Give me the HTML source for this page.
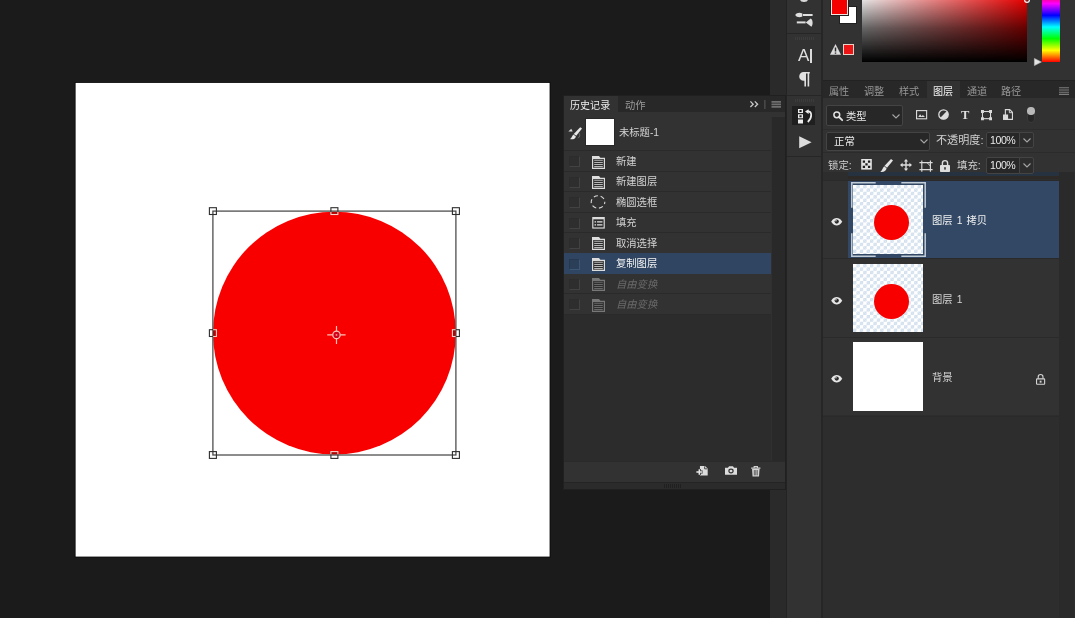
<!DOCTYPE html>
<html lang="zh-CN">
<head>
<meta charset="utf-8">
<title>Photoshop</title>
<style>
*{box-sizing:border-box;margin:0;padding:0}
html,body{width:1075px;height:618px;overflow:hidden;background:#1b1b1b}
body{position:relative;font-family:"Liberation Sans","Noto Sans CJK SC",sans-serif;font-size:10px;color:#d6d6d6;line-height:1}
.a{position:absolute}
svg{position:absolute;overflow:visible}
.t{will-change:transform;position:absolute;white-space:nowrap;line-height:12px;height:12px}
/* strips */
#strip{left:770px;top:0;width:17px;height:618px;background:#2a2a2a}
#toolcol{left:787px;top:0;width:34px;height:618px;background:#323232}
#gap{left:821px;top:0;width:2px;height:618px;background:#262626}
#right{left:823px;top:0;width:252px;height:618px;background:#2d2d2d}
/* history */
#hist{left:563px;top:95px;width:223px;height:395px;background:#2c2c2c;border:1px solid #202020;overflow:hidden}
#hist .tabs{left:0;top:0;width:221px;height:16px;background:#282828}
#hist .tabon{left:0;top:0;width:54px;height:16px;background:#323232}
#hist .list{left:0;top:16px;width:221px;height:203.4px;background:#323232}
#hist .track{left:207px;top:21px;width:14px;height:344px;background:#292929;border-left:1px solid #303030}
#hist .row{left:0;width:207px;height:20.45px;border-top:1px solid #2a2a2a}
#hist .row.sel{background:#2f4561;height:21.3px;z-index:1;border-top-color:#2f4561}
#hist .cb{position:absolute;left:5px;top:5px;width:11px;height:11px;background:#2e2e2e;border:1px solid #424242;border-top-color:#2c2c2c;border-left-color:#2c2c2c}
#hist .row.sel .cb{background:#2b3f59;border-color:#28384e #3c5676 #3c5676 #28384e}
#hist .row .t{left:51.5px;top:4.6px;font-size:10.3px;color:#d2d2d2}
#hist .row.dis .t{color:#6a6a6a;font-style:italic}
#hist .row.sel .t{color:#f4f4f4}
#hist .foot{left:0;top:365px;width:221px;height:21px;background:#323232;border-top:1px solid #2a2a2a}
#hist .grip{left:0;top:386px;width:221px;height:7px;background:#2b2b2b;border-top:1px solid #242424}
/* right dock */
#right .cp{left:0;top:0;width:252px;height:80px;background:#323232}
#right .tabs{left:0;top:80px;width:252px;height:18px;background:#282828;border-top:1px solid #222}
#right .tabs .t{top:5px;font-size:10.1px;color:#969696}
#right .tabon{left:104px;top:81px;width:33px;height:17px;background:#323232}
#right .opts{left:0;top:98px;width:252px;height:74px;background:#323232}
#right .dd{position:absolute;background:#272727;border:1px solid #444;border-radius:2px}
#right .lay{left:0;width:236px;height:78.7px;background:#323232;border-top:1px solid #2a2a2a}
#right .lay .t{word-spacing:1.2px;left:109.4px;top:34.6px;font-size:10.3px;color:#d4d4d4}
#right .thumb{position:absolute;left:30.4px;top:4.8px;width:70px;height:68.4px;background:#fff}
#right .chk{background-color:#fff;background-image:linear-gradient(45deg,#d3e0ee 25%,transparent 25%,transparent 75%,#d3e0ee 75%),linear-gradient(45deg,#d3e0ee 25%,transparent 25%,transparent 75%,#d3e0ee 75%);background-size:6.8px 6.8px;background-position:0 0,3.4px 3.4px}
#right .dot{position:absolute;left:20.4px;top:19.6px;width:35px;height:35px;border-radius:50%;background:#f80000}
</style>
</head>
<body>
<!-- document canvas -->
<svg id="doc" width="1075" height="618" style="left:0;top:0">
<defs><clipPath id="cc"><circle cx="334.4" cy="333.1" r="121.4"/></clipPath></defs>
<rect x="74.8" y="82.1" width="475.6" height="475.3" fill="#050505"/>
<rect x="75.6" y="82.9" width="474" height="473.7" fill="#fff"/>
<circle cx="334.4" cy="333.1" r="121.4" fill="#f80000"/>
<rect x="212.9" y="211.1" width="243.0" height="243.9" fill="none" stroke="#484848" stroke-width="1.25"/>
<g><rect x="209.4" y="207.7" width="7" height="6.8" fill="none" stroke="#2e2e2e" stroke-width="1.1"/><rect x="330.9" y="207.7" width="7" height="6.8" fill="none" stroke="#2e2e2e" stroke-width="1.1"/><rect x="452.4" y="207.7" width="7" height="6.8" fill="none" stroke="#2e2e2e" stroke-width="1.1"/><rect x="209.4" y="329.7" width="7" height="6.8" fill="none" stroke="#2e2e2e" stroke-width="1.1"/><rect x="452.4" y="329.7" width="7" height="6.8" fill="none" stroke="#2e2e2e" stroke-width="1.1"/><rect x="209.4" y="451.6" width="7" height="6.8" fill="none" stroke="#2e2e2e" stroke-width="1.1"/><rect x="330.9" y="451.6" width="7" height="6.8" fill="none" stroke="#2e2e2e" stroke-width="1.1"/><rect x="452.4" y="451.6" width="7" height="6.8" fill="none" stroke="#2e2e2e" stroke-width="1.1"/></g>
<g clip-path="url(#cc)"><rect x="209.4" y="207.7" width="7" height="6.8" fill="rgba(110,0,0,.45)" stroke="#ffd0c8" stroke-width="1.1"/><rect x="330.9" y="207.7" width="7" height="6.8" fill="rgba(110,0,0,.45)" stroke="#ffd0c8" stroke-width="1.1"/><rect x="452.4" y="207.7" width="7" height="6.8" fill="rgba(110,0,0,.45)" stroke="#ffd0c8" stroke-width="1.1"/><rect x="209.4" y="329.7" width="7" height="6.8" fill="rgba(110,0,0,.45)" stroke="#ffd0c8" stroke-width="1.1"/><rect x="452.4" y="329.7" width="7" height="6.8" fill="rgba(110,0,0,.45)" stroke="#ffd0c8" stroke-width="1.1"/><rect x="209.4" y="451.6" width="7" height="6.8" fill="rgba(110,0,0,.45)" stroke="#ffd0c8" stroke-width="1.1"/><rect x="330.9" y="451.6" width="7" height="6.8" fill="rgba(110,0,0,.45)" stroke="#ffd0c8" stroke-width="1.1"/><rect x="452.4" y="451.6" width="7" height="6.8" fill="rgba(110,0,0,.45)" stroke="#ffd0c8" stroke-width="1.1"/></g>
<g fill="none" stroke="#ffc2b4" stroke-width="1.2">
<circle cx="336.5" cy="334.9" r="3.7" fill="#d4001a"/>
<path d="M327.2 334.9H332.8M340.2 334.9H345.6M336.5 326V331.2M336.5 338.6V344"/>
</g>
<circle cx="336.5" cy="334.9" r="0.9" fill="#ff9a8c"/>
</svg>

<!-- vertical strips -->
<div class="a" id="strip"></div>
<div class="a" id="toolcol"></div>
<div class="a" id="gap"></div>

<!-- right dock -->
<div class="a" id="right">
<div class="a cp"></div>
<!-- color panel -->
<div class="a" style="left:17.2px;top:6.8px;width:16.2px;height:16.4px;background:#fff;outline:1px solid #202020"></div>
<div class="a" style="left:8px;top:-4px;width:16.6px;height:18.6px;background:#f40000;border:1px solid #f4e4e0;outline:1px solid #202020"></div>
<svg width="11" height="11" viewBox="0 0 11 11" style="left:6.6px;top:44.2px"><path d="M5.5 0L11 10.8H0Z" fill="#dcdcdc"/><path d="M5.5 3.6V7.4M5.5 8.4V9.8" stroke="#2a2a2a" stroke-width="1.5"/></svg>
<div class="a" style="left:20.3px;top:44px;width:11.2px;height:11.2px;background:#ec1414;border:1px solid #ecd2c6"></div>
<div class="a" style="left:39px;top:-6px;width:165.4px;height:67.8px;background:linear-gradient(to bottom,rgba(0,0,0,0) 0%,rgba(0,0,0,.6) 50%,#000 100%),linear-gradient(to right,#fff,#f00)"></div>
<div class="a" style="left:219.4px;top:-8px;width:17.2px;height:70px;background:linear-gradient(to bottom,#f00 0%,#f0f 16.67%,#00f 33.33%,#0ff 50%,#0f0 66.67%,#ff0 83.33%,#f00 100%)"></div>
<svg width="8" height="8" viewBox="0 0 8 8" style="left:210.6px;top:57.6px"><path d="M0.4 0.4L7.4 4L0.4 7.6Z" fill="#e4e4e4" stroke="#bbb" stroke-width="0.6"/></svg>
<svg width="6" height="4" viewBox="0 0 6 4" style="left:201px;top:0"><circle cx="3" cy="0" r="2.4" fill="none" stroke="#f2f2f2" stroke-width="1.2"/></svg>
<div class="a tabs">
<div class="t" style="left:6.2px">属性</div><div class="t" style="left:41px">调整</div><div class="t" style="left:75.6px">样式</div>
<div class="t" style="left:143.8px">通道</div><div class="t" style="left:177.8px">路径</div>
</div>
<div class="a tabon"></div>
<div class="t" style="left:110.4px;top:86px;font-size:10.1px;color:#f0f0f0">图层</div>
<svg width="10" height="8" viewBox="0 0 10 8" style="left:236px;top:86.5px"><path d="M0 0.8H10M0 3H10M0 5.2H10M0 7.4H10" stroke="#7c7c7c" stroke-width="1.1"/></svg>
<div class="a opts"></div>
<div class="a" style="left:24.5px;top:171.5px;width:211.5px;height:4.4px;background:#26323f"></div>
<div class="a" style="left:24.5px;top:175.9px;width:211.5px;height:3.6px;background:#2c2927"></div>
<!-- filter row -->
<div class="dd" style="left:3px;top:105px;width:77px;height:20.5px"></div>
<svg width="10" height="10" viewBox="0 0 10 10" style="left:10px;top:110.5px"><circle cx="3.8" cy="3.8" r="2.9" fill="none" stroke="#e2e2e2" stroke-width="1.5"/><path d="M6 6L9.2 9.2" stroke="#e2e2e2" stroke-width="1.8" stroke-linecap="round"/></svg>
<div class="t" style="left:23px;top:110.8px;font-size:10.3px;color:#e6e6e6">类型</div>
<svg width="8" height="5" viewBox="0 0 8 5" style="left:69px;top:113.5px"><path d="M0.5 0.5L4 4L7.5 0.5" fill="none" stroke="#a6a6a6" stroke-width="1.1"/></svg>
<svg width="11.2" height="9.4" viewBox="0 0 12 10" style="left:93.2px;top:109.7px"><rect x="0.6" y="0.6" width="10.8" height="8.8" fill="none" stroke="#dadada" stroke-width="1.2"/><path d="M2.4 7.6L4.4 4.6L6 6.6L7.4 5.4L9.6 7.6Z" fill="#dadada"/></svg>
<svg width="11" height="11" viewBox="0 0 11 11" style="left:115.2px;top:109.4px"><circle cx="5.5" cy="5.5" r="4.7" fill="none" stroke="#dadada" stroke-width="1.3"/><path d="M8.9 2.1A4.8 4.8 0 0 1 2.1 8.9Z" fill="#dadada"/></svg>
<div class="t" style="left:137.6px;top:107.6px;font-family:'Liberation Serif',serif;font-weight:bold;font-size:12.5px;line-height:14px;height:14px;color:#dedede">T</div>
<svg width="11" height="10.2" viewBox="0 0 12 11" style="left:157.6px;top:109.6px"><rect x="1.6" y="1.6" width="8.8" height="7.8" fill="none" stroke="#dadada" stroke-width="1.2"/><path d="M0 0H3.2V3.2H0ZM8.8 0H12V3.2H8.8ZM0 7.8H3.2V11H0ZM8.8 7.8H12V11H8.8Z" fill="#dadada"/></svg>
<svg width="10" height="11" viewBox="0 0 11 12" style="left:179.8px;top:109.4px"><path d="M2.6 0.6H7.4L10.4 3.6V11.4H2.6Z" fill="none" stroke="#dadada" stroke-width="1.2"/><path d="M7 0.6V4H10.4" fill="none" stroke="#dadada" stroke-width="1"/><rect x="0" y="6" width="5.6" height="6" fill="#dadada"/></svg>
<div class="a" style="left:204.3px;top:108px;width:8px;height:15px;border-radius:4px;background:#262626;border:1px solid #3a3a3a"></div>
<div class="a" style="left:204.4px;top:107.2px;width:7.6px;height:7.6px;border-radius:50%;background:#b9b9b9"></div>
<div class="a" style="left:0;top:129px;width:252px;height:1px;background:#2c2c2c"></div>
<!-- blend row -->
<div class="dd" style="left:3px;top:132px;width:104px;height:18.5px"></div>
<div class="t" style="left:10.6px;top:135.6px;font-size:10.4px;color:#ececec">正常</div>
<svg width="8" height="5" viewBox="0 0 8 5" style="left:96.6px;top:139.4px"><path d="M0.5 0.5L4 4L7.5 0.5" fill="none" stroke="#a6a6a6" stroke-width="1.1"/></svg>
<div class="t" style="left:112.6px;top:133.6px;font-size:11.1px;color:#cfcfcf">不透明度:</div>
<div class="dd" style="left:162.8px;top:131.5px;width:34.2px;height:16.5px;border-radius:2px 0 0 2px"></div>
<div class="dd" style="left:196px;top:131.5px;width:15px;height:16.5px;background:#2d2d2d;border-radius:0 2px 2px 0"></div>
<div class="t" style="left:166.6px;top:133.8px;font-size:10.6px;color:#e8e8e8;letter-spacing:-0.45px">100%</div>
<svg width="8" height="5" viewBox="0 0 8 5" style="left:199.6px;top:138px"><path d="M0.5 0.5L4 4L7.5 0.5" fill="none" stroke="#a6a6a6" stroke-width="1.1"/></svg>
<div class="a" style="left:0;top:152px;width:252px;height:1px;background:#2b2b2b"></div>
<!-- lock row -->
<div class="t" style="left:5.4px;top:160.3px;font-size:10.4px;color:#cfcfcf">锁定:</div>
<svg width="11" height="10.6" viewBox="0 0 11 11" style="left:38.2px;top:159.4px"><rect width="11" height="11" fill="#e4e4e4"/><path d="M1.6 1.6H4V4H1.6ZM7 1.6H9.4V4H7ZM4.3 4.3H6.7V6.7H4.3ZM1.6 7H4V9.4H1.6ZM7 7H9.4V9.4H7Z" fill="#1e1e1e"/></svg>
<svg width="13" height="13" viewBox="0 0 13 13" style="left:57.4px;top:159px"><path d="M11 0L13 1.6L7 8.8L4.6 6.8Z" fill="#e4e4e4"/><path d="M4.2 7.2L6.6 9.2C6.2 12 3.6 13.2 0.2 12.8C2.4 11.6 2.4 8.8 4.2 7.2Z" fill="#e4e4e4"/></svg>
<svg width="12" height="12" viewBox="0 0 12 12" style="left:77.2px;top:159.4px"><path d="M6 0L8.2 2.6H6.7V5.3H9.4V3.8L12 6L9.4 8.2V6.7H6.7V9.4H8.2L6 12L3.8 9.4H5.3V6.7H2.6V8.2L0 6L2.6 3.8V5.3H5.3V2.6H3.8Z" fill="#dcdcdc"/></svg>
<svg width="14" height="12" viewBox="0 0 14 12" style="left:95.6px;top:160.2px"><path d="M0.4 2.6H13.6M0.4 9.6H13.6M2.8 0.4V11.8M11.4 0.4V11.8" fill="none" stroke="#dcdcdc" stroke-width="1.15"/><path d="M8 2.6L11.4 6" stroke="#dcdcdc" stroke-width="1"/></svg>
<svg width="10" height="12" viewBox="0 0 10 12" style="left:117px;top:159.6px"><path d="M2.4 5.4V3.2A2.6 2.6 0 0 1 7.6 3.2V5.4" fill="none" stroke="#dcdcdc" stroke-width="1.4"/><rect x="0" y="5" width="10" height="7" rx="0.8" fill="#dcdcdc"/><rect x="4.2" y="7.2" width="1.6" height="2.4" fill="#323232"/></svg>
<div class="t" style="left:134.2px;top:159.8px;font-size:10.4px;color:#cfcfcf">填充:</div>
<div class="dd" style="left:162.8px;top:156.5px;width:34.2px;height:17.5px;border-radius:2px 0 0 2px"></div>
<div class="dd" style="left:196px;top:156.5px;width:15px;height:17.5px;background:#2d2d2d;border-radius:0 2px 2px 0"></div>
<div class="t" style="left:166.6px;top:159.4px;font-size:10.6px;color:#e8e8e8;letter-spacing:-0.45px">100%</div>
<svg width="8" height="5" viewBox="0 0 8 5" style="left:199.6px;top:163.4px"><path d="M0.5 0.5L4 4L7.5 0.5" fill="none" stroke="#a6a6a6" stroke-width="1.1"/></svg>
<div class="a" style="left:236px;top:172px;width:14.5px;height:446px;background:#2a2a2a"></div>
<!-- layers list -->
<div class="a lay" style="top:179.6px">
<div class="a" style="left:24.5px;top:0;width:211.5px;height:78.7px;background:#324864"></div>
<svg width="11.4" height="7.4" viewBox="0 0 12 8" style="left:7.8px;top:37.5px"><path d="M0 4C2 0.8 4 0 6 0C8 0 10 0.8 12 4C10 7.2 8 8 6 8C4 8 2 7.2 0 4Z" fill="#e6e6e6"/><circle cx="6" cy="3.8" r="2.3" fill="#2a2a2a"/><circle cx="5.2" cy="3" r="0.8" fill="#e6e6e6"/></svg>
<div class="thumb chk"><div class="dot"></div></div>
<svg width="75" height="75" viewBox="0 0 76 76" style="left:27.8px;top:1.2px"><path d="M0.8 26V0.8H25M51 0.8H75.2V26M75.2 52V75.2H51M25 75.2H0.8V52" fill="none" stroke="#c3cdd8" stroke-width="1.5"/></svg>
<div class="t" style="color:#f0f0f0">图层 1 拷贝</div>
</div>
<div class="a lay" style="top:258.2px">
<svg width="11.4" height="7.4" viewBox="0 0 12 8" style="left:7.8px;top:37.5px"><path d="M0 4C2 0.8 4 0 6 0C8 0 10 0.8 12 4C10 7.2 8 8 6 8C4 8 2 7.2 0 4Z" fill="#e6e6e6"/><circle cx="6" cy="3.8" r="2.3" fill="#2a2a2a"/><circle cx="5.2" cy="3" r="0.8" fill="#e6e6e6"/></svg>
<div class="thumb chk"><div class="dot"></div></div>
<div class="t">图层 1</div>
</div>
<div class="a lay" style="top:336.7px">
<svg width="11.4" height="7.4" viewBox="0 0 12 8" style="left:7.8px;top:37.5px"><path d="M0 4C2 0.8 4 0 6 0C8 0 10 0.8 12 4C10 7.2 8 8 6 8C4 8 2 7.2 0 4Z" fill="#e6e6e6"/><circle cx="6" cy="3.8" r="2.3" fill="#2a2a2a"/><circle cx="5.2" cy="3" r="0.8" fill="#e6e6e6"/></svg>
<div class="thumb"></div>
<div class="t">背景</div>
<svg width="9.2" height="10.8" viewBox="0 0 10 12" preserveAspectRatio="none" style="left:213.2px;top:36px"><path d="M2.4 5.4V3.2A2.6 2.6 0 0 1 7.6 3.2V5.4" fill="none" stroke="#d4d4d4" stroke-width="1.2"/><rect x="0.6" y="5.4" width="8.8" height="6" rx="0.6" fill="none" stroke="#d4d4d4" stroke-width="1.2"/><rect x="4" y="7.4" width="2" height="2.2" fill="#d4d4d4"/></svg>
</div>
<div class="a" style="left:0;top:415.6px;width:236px;height:1px;background:#2a2a2a"></div>
</div>

<div class="a" style="left:786px;top:0;width:1px;height:618px;background:#232323"></div>
<!-- tool column icons -->
<div class="a" id="tools" style="left:787px;top:0;width:34px;height:618px">
<div class="a" style="left:13px;top:-4px;width:7.6px;height:5.6px;border-radius:50%;background:#d8d8d8"></div>
<svg width="19" height="16" viewBox="0 0 19 16" style="left:8.4px;top:11.6px"><path d="M0.2 3C1.6 1 4 0 7.4 1.4V4.6C4 6 1.6 5 0.2 3Z" fill="#dedede"/><path d="M8 3H17.6" stroke="#dedede" stroke-width="2"/><path d="M1.8 10.4H10.6" stroke="#dedede" stroke-width="2"/><path d="M10.8 10.4L15.6 6.6C17.8 7.6 18.4 12.2 16.4 14.8Z" fill="#dedede"/></svg>
<div class="a" style="left:0;top:33px;width:34px;height:1px;background:#262626"></div>
<div class="a" style="left:8px;top:37px;width:19px;height:3px;background:repeating-linear-gradient(90deg,#3c3c3c 0 1px,transparent 1px 2px)"></div>
<div class="t" style="left:11.4px;top:47.4px;font-size:17px;line-height:18px;height:18px;color:#e0e0e0">A</div>
<div class="a" style="left:23.4px;top:48.6px;width:1.2px;height:14.6px;background:#dcdcdc"></div>
<svg width="11" height="15" viewBox="0 0 11 15" style="left:12.4px;top:72.4px"><path d="M10.8 0H4.6A4.4 4.4 0 0 0 4.6 8.8H5.4V14.6H7V1.4H8.6V14.6H10.2V1.4H10.8Z" fill="#e0e0e0"/></svg>
<div class="a" style="left:0;top:95px;width:34px;height:1px;background:#262626"></div>
<div class="a" style="left:8px;top:99px;width:19px;height:3px;background:repeating-linear-gradient(90deg,#3c3c3c 0 1px,transparent 1px 2px)"></div>
<div class="a" style="left:5px;top:106.4px;width:23.2px;height:19px;background:#1f1f1f"></div>
<svg width="14" height="15" viewBox="0 0 14 15" style="left:11px;top:109px"><path d="M0 0H5V4H0ZM0 5.2H5V9.2H0ZM0 10.4H5V14.6H0Z" fill="#ececec"/><path d="M1.4 1H3.6V3H1.4ZM1.4 6.2H3.6V8.2H1.4Z" fill="#1f1f1f"/><path d="M7 2.6L10.6 0.2V5Z" fill="#ececec"/><path d="M10 2.4C14 2.4 14.6 8.6 9.8 13" fill="none" stroke="#ececec" stroke-width="1.7"/></svg>
<svg width="13" height="13" viewBox="0 0 13 13" style="left:12px;top:135.6px"><path d="M0.2 0.2L12.6 6.2L0.2 12.2Z" fill="#dcdcdc"/></svg>
<div class="a" style="left:0;top:155.5px;width:34px;height:1px;background:#262626"></div>
</div>

<!-- history panel -->
<div class="a" id="hist">
<div class="a tabs"></div><div class="a tabon"></div>
<div class="t" style="left:6px;top:3.5px;font-size:10.05px;color:#ececec">历史记录</div>
<div class="t" style="left:61px;top:3.5px;font-size:10.3px;color:#9a9a9a">动作</div>
<svg width="30" height="10" viewBox="0 0 30 10" style="left:184.6px;top:3.6px"><path d="M1.4 1.4L4.2 4.2L1.4 7M5.8 1.4L8.6 4.2L5.8 7" fill="none" stroke="#c8c8c8" stroke-width="1.3"/><path d="M15.9 0V9" stroke="#5c5c5c" stroke-width="1"/><path d="M22.5 1.8H32M22.5 4.3H32M22.5 6.8H32" stroke="#6e6e6e" stroke-width="1.7"/></svg>
<div class="a list"></div>
<div class="a track"></div>
<!-- snapshot row -->
<svg width="14.4" height="13" viewBox="0 0 16 14" style="left:3.8px;top:30.6px"><path d="M13.6 0L15.6 1.4L9.2 9.6L6.4 7.6Z" fill="#e8e8e8"/><path d="M6 8L8.8 10.2C8.2 13 5.4 13.8 2.2 13.2C4.2 12 4.2 9.6 6 8Z" fill="#e8e8e8"/><path d="M0.4 4.8L5.2 4.8L3.6 1.6Z" fill="#dadada"/><path d="M12 6.4C13.6 8.2 13.2 10.8 11.2 12.2" fill="none" stroke="#6c6c6c" stroke-width="1.1"/></svg>
<div class="a" style="left:22.4px;top:23.2px;width:27.2px;height:26.2px;background:#fff;outline:1px solid #292929"></div>
<div class="t" style="left:55px;top:30.5px;font-size:10.3px;color:#d2d2d2">未标题-1</div>
<div class="a row " style="top:54.30px"><div class="cb"></div><svg width="13" height="13" viewBox="0 0 13 13" style="left:28px;top:4.3px"><path d="M0 0H7L8.4 1.8H13V13H0Z" fill="#dcdcdc"/><rect x="1.2" y="3" width="10.6" height="8.8" fill="#2e2e2e"/><path d="M2.2 4.3H10.8M2.2 6.4H10.8M2.2 8.5H10.8M2.2 10.6H10.8" stroke="#b8b8b8" stroke-width="1.05"/></svg><div class="t">新建</div></div>
<div class="a row " style="top:74.75px"><div class="cb"></div><svg width="13" height="13" viewBox="0 0 13 13" style="left:28px;top:4.3px"><path d="M0 0H7L8.4 1.8H13V13H0Z" fill="#dcdcdc"/><rect x="1.2" y="3" width="10.6" height="8.8" fill="#2e2e2e"/><path d="M2.2 4.3H10.8M2.2 6.4H10.8M2.2 8.5H10.8M2.2 10.6H10.8" stroke="#b8b8b8" stroke-width="1.05"/></svg><div class="t">新建图层</div></div>
<div class="a row " style="top:95.20px"><div class="cb"></div><svg width="16" height="16" viewBox="0 0 16 16" style="left:26.2px;top:2.2px"><ellipse cx="8" cy="8" rx="6.8" ry="6.2" fill="none" stroke="#d8d8d8" stroke-width="1.1" stroke-dasharray="4.2 2.8" stroke-dashoffset="2.1"/></svg><div class="t">椭圆选框</div></div>
<div class="a row " style="top:115.65px"><div class="cb"></div><svg width="13" height="11.6" viewBox="0 0 13 12" style="left:28px;top:4.6px"><rect x="0" y="0" width="13" height="12" fill="#dcdcdc"/><rect x="1.2" y="2.4" width="10.6" height="8.4" fill="#2e2e2e"/><path d="M2.4 5H4M5 5H10.6M2.4 8.2H4M5 8.2H10.6" stroke="#e4e4e4" stroke-width="1.4"/></svg><div class="t">填充</div></div>
<div class="a row " style="top:136.10px"><div class="cb"></div><svg width="13" height="13" viewBox="0 0 13 13" style="left:28px;top:4.3px"><path d="M0 0H7L8.4 1.8H13V13H0Z" fill="#dcdcdc"/><rect x="1.2" y="3" width="10.6" height="8.8" fill="#2e2e2e"/><path d="M2.2 4.3H10.8M2.2 6.4H10.8M2.2 8.5H10.8M2.2 10.6H10.8" stroke="#b8b8b8" stroke-width="1.05"/></svg><div class="t">取消选择</div></div>
<div class="a row sel" style="top:156.55px"><div class="cb"></div><svg width="13" height="13" viewBox="0 0 13 13" style="left:28px;top:4.3px"><path d="M0 0H7L8.4 1.8H13V13H0Z" fill="#dcdcdc"/><rect x="1.2" y="3" width="10.6" height="8.8" fill="#2e2e2e"/><path d="M2.2 4.3H10.8M2.2 6.4H10.8M2.2 8.5H10.8M2.2 10.6H10.8" stroke="#b8b8b8" stroke-width="1.05"/></svg><div class="t">复制图层</div></div>
<div class="a row dis" style="top:177.00px"><div class="cb"></div><svg width="13" height="13" viewBox="0 0 13 13" style="left:28px;top:4.3px"><path d="M0 0H7L8.4 1.8H13V13H0Z" fill="#777"/><rect x="1.2" y="3" width="10.6" height="8.8" fill="#2e2e2e"/><path d="M2.2 4.3H10.8M2.2 6.4H10.8M2.2 8.5H10.8M2.2 10.6H10.8" stroke="#6a6a6a" stroke-width="1.05"/></svg><div class="t">自由变换</div></div>
<div class="a row dis" style="top:197.45px"><div class="cb"></div><svg width="13" height="13" viewBox="0 0 13 13" style="left:28px;top:4.3px"><path d="M0 0H7L8.4 1.8H13V13H0Z" fill="#777"/><rect x="1.2" y="3" width="10.6" height="8.8" fill="#2e2e2e"/><path d="M2.2 4.3H10.8M2.2 6.4H10.8M2.2 8.5H10.8M2.2 10.6H10.8" stroke="#6a6a6a" stroke-width="1.05"/></svg><div class="t">自由变换</div></div>
<div class="a" style="left:0;top:217.90px;width:207px;height:1px;background:#2a2a2a"></div>
<div class="a foot">
<svg width="12.6" height="10" viewBox="0 0 14 12" preserveAspectRatio="none" style="left:131.8px;top:3.8px"><path d="M4.4 0H10L13 3V11.4H4.4Z" fill="#dcdcdc"/><path d="M9.6 0.4V3.4H12.6" fill="none" stroke="#323232" stroke-width="1"/><path d="M0 7.2H7.4M3.7 3.6V10.8" stroke="#323232" stroke-width="3.4"/><path d="M0.4 7.2H7M3.7 4V10.4" stroke="#e8e8e8" stroke-width="1.7"/></svg>
<svg width="12" height="9.2" viewBox="0 0 13 11" preserveAspectRatio="none" style="left:161px;top:4.2px"><path d="M0 2H3.2L4.4 0.2H8.6L9.8 2H13V10.6H0Z" fill="#dcdcdc"/><circle cx="6.5" cy="6" r="2.9" fill="#323232"/><circle cx="6.5" cy="6" r="1.6" fill="#dcdcdc"/></svg>
<svg width="9.6" height="10.6" viewBox="0 0 11 12" preserveAspectRatio="none" style="left:187px;top:4.2px"><path d="M0.2 2.4H10.8M3.6 2V0.6H7.4V2" fill="none" stroke="#d4d4d4" stroke-width="1.2"/><path d="M1.2 3.4H9.8L9.2 11.8H1.8Z" fill="#d4d4d4"/><path d="M3.8 4.6V10.6M5.5 4.6V10.6M7.2 4.6V10.6" stroke="#323232" stroke-width="0.8"/></svg>
</div>
<div class="a grip"></div>
<div class="a" style="left:100px;top:388px;width:18px;height:4px;background:repeating-linear-gradient(90deg,#202020 0 1px,transparent 1px 2px)"></div>
</div>

</body>
</html>
